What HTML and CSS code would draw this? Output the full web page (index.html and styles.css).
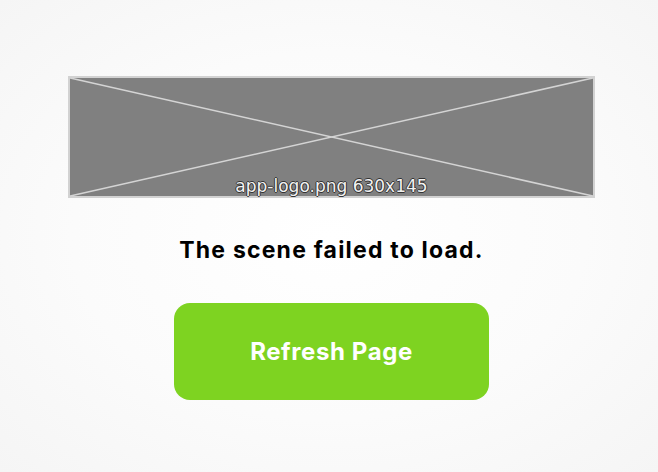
FILE: index.html
```html
<!DOCTYPE html>
<html lang="en">
<head>
  <meta charset="UTF-8">
  <title>Scene Error</title>
  <meta name="viewport" content="width=device-width, initial-scale=1.0">
  <link rel="stylesheet" href="styles.css">
</head>
<body>

  <!-- Error screen -->
  <div class="error-page">
    <div class="logo-missing">
      <svg class="logo-cross" viewBox="0 0 523 118" preserveAspectRatio="none">
        <line x1="0" y1="0" x2="523" y2="118" />
        <line x1="0" y1="118" x2="523" y2="0" />
      </svg>
      <span class="logo-label">app-logo.png 630x145</span>
    </div>

    <h1>The scene failed to load.</h1>

    <button class="refresh-btn" onclick="location.reload()">Refresh Page</button>
  </div>

</body>
</html>
```

FILE: styles.css
```css
* {
  box-sizing: border-box;
}
body {
  margin: 0;
  height: 100vh;
  font-family: 'Inter', sans-serif;
  background: radial-gradient(ellipse at center, #ffffff 0%, #fbfbfb 55%, #f5f5f5 100%);
}
.error-page {
  display: flex;
  flex-direction: column;
  align-items: center;
  padding-top: 76px;
  padding-left: 5px;
}
.logo-missing {
  position: relative;
  width: 527px;
  height: 122px;
  background-color: #808080;
  border: 2px solid #d2d2d2;
}
.logo-cross {
  display: block;
  width: 100%;
  height: 100%;
}
.logo-cross line {
  stroke: #d4d4d4;
  stroke-width: 1.6;
}
.logo-label {
  position: absolute;
  left: 0;
  right: 0;
  bottom: 0;
  text-align: center;
  font-family: 'DejaVu Sans', sans-serif;
  font-size: 17px;
  color: #f2f2f2;
  text-shadow: -1px 0 #333, 1px 0 #333, 0 -1px #333, 0 1px #333;
}
h1 {
  margin: 38px 0 0;
  font-size: 23px;
  font-weight: 700;
  color: #000;
  letter-spacing: 1.2px;
}
.refresh-btn {
  margin-top: 39px;
  width: 315px;
  height: 97px;
  background-color: #7ed321;
  color: white;
  border: none;
  border-radius: 16px;
  font-family: 'Inter', sans-serif;
  font-size: 24px;
  font-weight: 700;
  letter-spacing: 0.6px;
  cursor: pointer;
}
```
